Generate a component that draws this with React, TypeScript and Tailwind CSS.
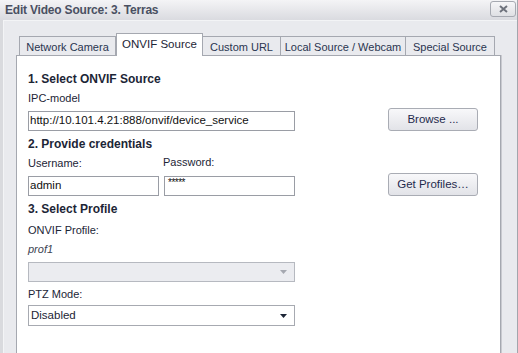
import React from 'react';

const tabs = [
    { label: 'Network Camera', w: 'w-[97px]' },
    { label: 'ONVIF Source', w: 'w-[87px]', active: true },
    { label: 'Custom URL', w: 'w-[78px]' },
    { label: 'Local Source / Webcam', w: 'w-[125px]' },
    { label: 'Special Source', w: 'w-[89px]' },
];

const Button: React.FC<{ children: React.ReactNode }> = ({ children }) => (
    <button className="w-[90px] h-[23px] ml-[93px] rounded-[3px] border border-[#a9acb4] bg-gradient-to-b from-[#f8f8fa] to-[#e2e3e8] text-[#1f2a4d] text-[11.5px] leading-none">
        {children}
    </button>
);

const Label: React.FC<{ children: React.ReactNode; className?: string }> = ({ children, className = '' }) => (
    <div className={`h-[14px] leading-[14px] text-[#1c2536] ${className}`}>{children}</div>
);

const Heading: React.FC<{ children: React.ReactNode; className?: string }> = ({ children, className = '' }) => (
    <div className={`h-[14px] leading-[14px] font-bold text-[12px] text-[#1c2536] ${className}`}>{children}</div>
);

const Caret: React.FC<{ color: string }> = ({ color }) => (
    <svg width="7" height="4" viewBox="0 0 7 4" className="mr-[7px]">
        <path d="M0 0h7L3.5 4z" fill={color} />
    </svg>
);

const App: React.FC = () => {
    return (
        <div className="w-[518px] h-[353px] overflow-hidden flex flex-col bg-[#d9dade] border-r border-[#a3a6ad] font-['Liberation_Sans',Arial,sans-serif] text-[11px]">
            {/* title bar */}
            <div className="h-[20px] shrink-0 flex items-center justify-between pl-[5px] pr-[1px] bg-gradient-to-b from-[#f4f4f6] to-[#dadbe0]">
                <span className="font-bold text-[12px] text-[#4a5062] tracking-[-0.2px]">Edit Video Source: 3. Terras</span>
                <button className="w-[26px] h-[16px] mt-[-2px] rounded-[3px] border border-[#a6a9b1] bg-gradient-to-b from-[#f6f6f8] to-[#dfe0e4] flex items-center justify-center">
                    <svg width="9" height="8" viewBox="0 0 9 8">
                        <path d="M1 1l7 6M8 1L1 7" stroke="#6e727c" strokeWidth="2" />
                    </svg>
                </button>
            </div>

            {/* body */}
            <div className="flex-1 ml-[3px] border-t border-l border-[#f3f4f6] bg-[#e9eaee] flex flex-col pt-[12px] pl-[12px]">
                <div className="flex items-end h-[22px] pl-[3px]">
                    {tabs.map(t =>
                        t.active ? (
                            <div key={t.label} className={`${t.w} shrink-0 whitespace-nowrap h-[23px] -mb-px relative z-10 bg-white border border-b-0 border-[#a5a8b0] flex items-center justify-center pb-[1px] text-[#1c2536] text-[11.5px]`}>
                                {t.label}
                            </div>
                        ) : (
                            <div key={t.label} className={`${t.w} shrink-0 whitespace-nowrap h-[19px] bg-[#e9eaee] border border-b-0 border-l-0 first:border-l border-[#a5a8b0] flex items-center justify-center pt-[2px] text-[#2a3550] text-[11px]`}>
                                {t.label}
                            </div>
                        )
                    )}
                </div>

                <div className="w-[485px] flex-1 bg-white border border-b-0 border-[#a5a8b0] shadow-[1px_0_0_#c9cad0] pl-[11px] pt-[16px] flex flex-col">
                    <Heading>1. Select ONVIF Source</Heading>
                    <Label className="mt-[5px]">IPC-model</Label>
                    <div className="mt-[3px] flex items-end h-[23px]">
                        <div className="w-[267px] h-[20px] border border-[#9a9da5] pl-[1px] flex items-center text-[11.5px] text-[#111]">
                            http://10.101.4.21:888/onvif/device_service
                        </div>
                        <Button>Browse ...</Button>
                    </div>

                    <Heading className="mt-[6px]">2. Provide credentials</Heading>
                    <div className="mt-[5px] flex gap-[5px] w-[267px]">
                        <Label className="w-[131px]">Username:</Label>
                        <Label className="w-[131px] -mt-px -ml-px">Password:</Label>
                    </div>
                    <div className="mt-[3px] flex items-end h-[23px]">
                        <div className="flex gap-[5px] w-[267px]">
                            <div className="w-[131px] h-[20px] border border-[#9a9da5] pl-[1px] flex items-center text-[11.5px] text-[#111]">admin</div>
                            <div className="w-[131px] h-[20px] border border-[#9a9da5] pl-[3px] flex items-start text-[10px] leading-[12px] tracking-[-0.5px] text-[#111]">*****</div>
                        </div>
                        <Button>Get Profiles…</Button>
                    </div>

                    <Heading className="mt-[6px]">3. Select Profile</Heading>
                    <Label className="mt-[7px]">ONVIF Profile:</Label>
                    <Label className="mt-[5px] italic text-[#3c4352]">prof1</Label>
                    <div className="mt-[6px] w-[267px] h-[20px] border border-[#b6b9c0] bg-[#ebecf0] flex items-center justify-end">
                        <Caret color="#a5a8b0" />
                    </div>

                    <Label className="mt-[5px]">PTZ Mode:</Label>
                    <div className="mt-[4px] w-[267px] h-[21px] border border-[#a7aab1] bg-white flex items-center justify-between pl-[2px] text-[11.5px] text-[#1c2536]">
                        <span>Disabled</span>
                        <Caret color="#1c2536" />
                    </div>
                </div>
            </div>
        </div>
    );
};

export default App;
